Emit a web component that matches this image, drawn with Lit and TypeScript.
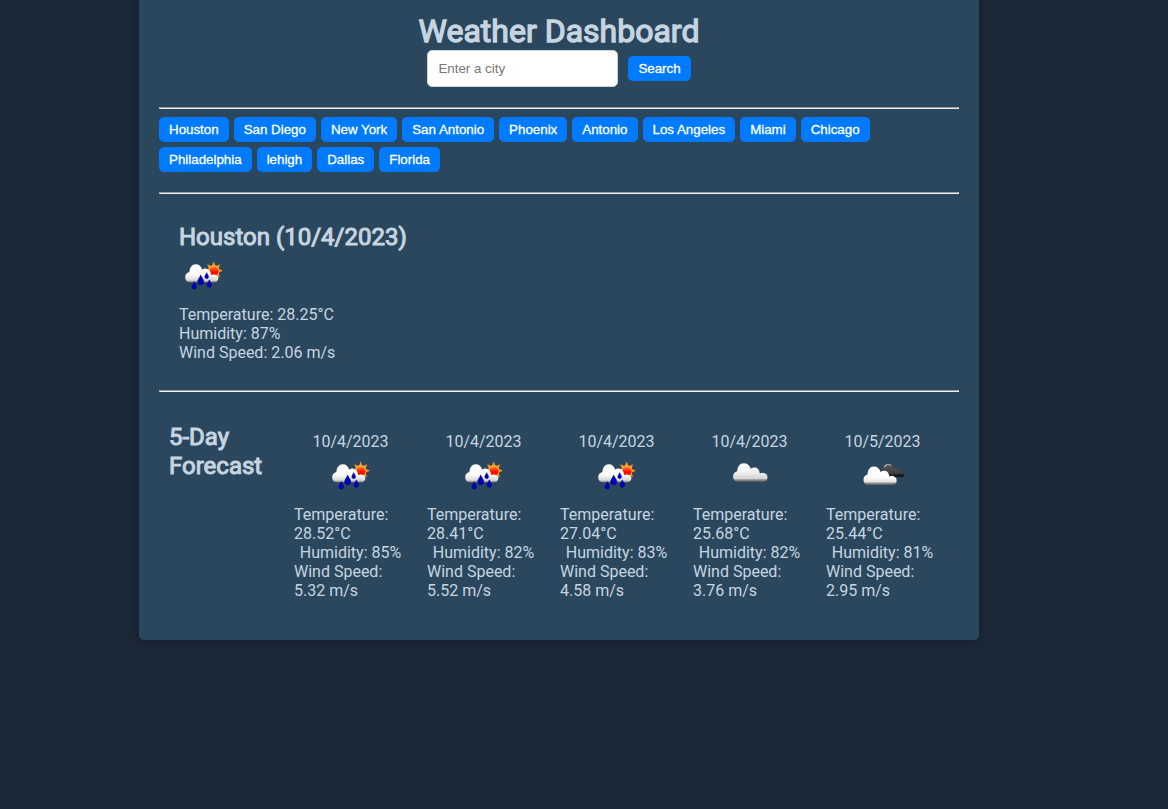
import { LitElement, html, css, svg } from "lit";
import { customElement, property } from "lit/decorators.js";

type Condition = "rain" | "cloud" | "broken";

interface Day {
  date: string;
  icon: Condition;
  temp: string;
  humidity: string;
  wind: string;
}

const CITIES = [
  "Houston", "San Diego", "New York", "San Antonio", "Phoenix", "Antonio",
  "Los Angeles", "Miami", "Chicago", "Philadelphia", "lehigh", "Dallas", "Florida",
];

const DAYS: Day[] = [
  { date: "10/4/2023", icon: "rain", temp: "28.52", humidity: "85", wind: "5.32" },
  { date: "10/4/2023", icon: "rain", temp: "28.41", humidity: "82", wind: "5.52" },
  { date: "10/4/2023", icon: "rain", temp: "27.04", humidity: "83", wind: "4.58" },
  { date: "10/4/2023", icon: "cloud", temp: "25.68", humidity: "82", wind: "3.76" },
  { date: "10/5/2023", icon: "broken", temp: "25.44", humidity: "81", wind: "2.95" },
];

const CLOUD =
  "M12.5 30.4C9.5 30.4 8.1 28.4 8.1 25.4C8.1 22.6 9.8 20.8 12.2 20.2C12.5 15.4 15 12.3 18.6 12.3C22.3 12.3 24.8 14.3 25.8 17.8C27 16.7 28.6 16.3 30.3 16.6C32.8 17 34.4 19 34.8 22.4C36.2 21.5 38.2 21.4 39.8 22.2C41.8 23 42.6 24.5 42.5 26.4C42.4 29 41 30.4 38.2 30.4Z";

const DROP = "M0 -5C0.6 -2.6 3.1 -0.6 3.1 1.8C3.1 3.7 1.8 4.8 0 4.8C-1.8 4.8 -3.1 3.7 -3.1 1.8C-3.1 -0.6 -0.6 -2.6 0 -5Z";

/** Eight-pointed star whose points are the rays of the sun. */
const RAYS = Array.from({ length: 16 }, (_, i) => {
  const r = i % 2 ? 5.2 : 9.2;
  const a = (i * Math.PI) / 8;
  return `${(34.7 + r * Math.sin(a)).toFixed(2)},${(19.8 - r * Math.cos(a)).toFixed(2)}`;
}).join(" ");

@customElement("weather-icon")
export class WeatherIcon extends LitElement {
  static styles = css`
    :host { display: block; width: 50px; height: 50px; }
    .icon { display: block; width: 50px; height: 50px; }
  `;

  @property() condition: Condition = "cloud";

  private rain() {
    return svg`
      <polygon fill="#f5981c" points=${RAYS}/>
      <circle cx="34.7" cy="19.8" r="5.5" fill="#fbb03a"/>
      <circle cx="34.9" cy="20.2" r="4.6" fill="url(#sun)"/>
      <path fill="url(#white)" d="M10.5 31.2C7.7 31 6.2 29 6.2 26.4C6.2 23.6 8 21.6 10.4 21.1C10.6 16.4 13 13.2 16.8 13.2C20 13.2 22.3 15.2 23.3 18.8C24.3 17.8 26 17.4 27.6 17.7C30.4 18.1 31.8 20.4 32 24C34 23.2 36.2 23.2 37.6 24.2C39 25.2 39.6 26.3 39.4 27.8C39 30.1 37.4 31.2 35.4 31.2Z"/>
      <g fill="#0505b8" stroke="#00007c" stroke-width=".6">
        <path transform="translate(15.3 34.4) scale(.76)" d=${DROP}/>
        <path transform="translate(21.7 29) scale(.98)" d=${DROP}/>
        <path transform="translate(27.7 24.7) scale(.62)" d=${DROP}/>
        <path transform="translate(30.3 32.6) scale(.76)" d=${DROP}/>
      </g>`;
  }

  private broken() {
    return svg`
      <path fill="url(#dark)" d="M29 26.1L25.3 18C25.5 14.8 27.6 12.9 30.6 12.9C33.3 12.9 35 14.4 35.6 16.8C38.2 16.2 39.8 17.4 40.6 20C43.8 19.8 46.4 21 46.4 23.4C46.4 25.2 45.2 26.1 43.2 26.1Z"/>
      <path fill="none" stroke="#b4b7b9" stroke-width="1.2" d="M26.2 16.4C27 14.2 28.6 13.4 30.4 13.5C31.6 13.6 32.4 14 32.9 14.8"/>
      <g transform="translate(-2.3 3) scale(.965 1.01)"><path fill="url(#bright)" d=${CLOUD}/></g>`;
  }

  render() {
    const shape =
      this.condition === "rain" ? this.rain()
      : this.condition === "broken" ? this.broken()
      : svg`<path fill="url(#grey)" d=${CLOUD}/>`;
    return html`
      <svg class="icon" viewBox="0 0 50 50" aria-hidden="true">
        <defs>
          <linearGradient id="white" x1="0" y1="0" x2="0" y2="1">
            <stop offset="0" stop-color="#fff"/><stop offset=".6" stop-color="#fafafa"/>
            <stop offset=".88" stop-color="#d8d8d8"/><stop offset="1" stop-color="#8a8a8a"/>
          </linearGradient>
          <linearGradient id="bright" x1="0" y1="0" x2="0" y2="1">
            <stop offset="0" stop-color="#fff"/><stop offset=".6" stop-color="#fcfcfc"/>
            <stop offset=".85" stop-color="#e4e4e4"/><stop offset=".91" stop-color="#8d8d8d"/><stop offset="1" stop-color="#777"/>
          </linearGradient>
          <linearGradient id="grey" x1="0" y1="0" x2="0" y2="1">
            <stop offset="0" stop-color="#fff"/><stop offset=".5" stop-color="#f0f0f0"/>
            <stop offset=".86" stop-color="#d2d2d2"/><stop offset=".91" stop-color="#8d8d8d"/><stop offset="1" stop-color="#777"/>
          </linearGradient>
          <linearGradient id="dark" x1="0" y1="0" x2="0" y2="1">
            <stop offset="0" stop-color="#555"/><stop offset=".7" stop-color="#414141"/>
            <stop offset=".85" stop-color="#1c1c1c"/><stop offset="1" stop-color="#101010"/>
          </linearGradient>
          <linearGradient id="sun" x1="0" y1="0" x2="0" y2="1">
            <stop offset="0" stop-color="#ff8a2a"/><stop offset=".35" stop-color="#ff3a12"/>
            <stop offset=".6" stop-color="#ff0800"/><stop offset="1" stop-color="#ff1a00"/>
          </linearGradient>
        </defs>
        ${shape}
      </svg>`;
  }
}

@customElement("app-root")
export class AppRoot extends LitElement {
  static styles = css`
    :host {
      display: flow-root;
      box-sizing: border-box;
      height: 809px;
      overflow: hidden;
      background: #1b2838;
      color: #c7d5e0;
      font: 16px/19px Roboto, sans-serif;
    }
    .panel {
      box-sizing: border-box;
      width: 840px;
      margin: -9px 0 0 139px;
      padding: 20px;
      background: #2a475e;
      border-radius: 5px;
      box-shadow: 0 0 10px rgba(0, 0, 0, 0.3);
    }
    .title, .heading {
      margin: 0;
      font-weight: 400;
      -webkit-text-stroke: 1px currentColor;
    }
    .title { padding-top: 1px; font-size: 32px; line-height: 39px; margin-bottom: -1px; text-align: center; -webkit-text-stroke-width: 1.3px; }
    .heading { padding-top: 1px; margin-bottom: -1px; font-size: 24px; line-height: 29px; }
    .search { display: flex; justify-content: center; align-items: center; gap: 10px; margin-bottom: 20px; }
    .field {
      box-sizing: border-box;
      width: 191px;
      height: 37px;
      padding: 10px;
      border: 1px solid #c7d5e0;
      border-radius: 5px;
      background: #fff;
      font: 13.333px "Liberation Sans", Arial, sans-serif;
    }
    .button {
      padding: 5px 10px;
      border: 0;
      border-radius: 5px;
      background: #007bff;
      color: #fff;
      font: 13.333px/15px "Liberation Sans", Arial, sans-serif;
      -webkit-text-stroke: 0.3px #fff;
    }
    .rule { margin: 0 0 8px; }
    .cities { display: flex; flex-wrap: wrap; gap: 5px; margin-bottom: 20px; }
    .current { padding: 20px; margin-bottom: 8px; border-radius: 5px; box-shadow: 0 0 10px rgba(0, 0, 0, 0.03); }
    .current .details { margin-top: 4px; }
    .forecast { display: grid; grid-template-columns: 115px repeat(5, 133px); padding: 22px 10px 10px; }
    .day { display: flex; flex-direction: column; align-items: center; padding: 10px; }
    .temp { margin-top: 4px; }
    .temp, .wind { align-self: stretch; }
  `;

  render() {
    return html`
      <main class="panel">
        <h1 class="title">Weather Dashboard</h1>
        <div class="search">
          <input class="field" type="text" placeholder="Enter a city" />
          <button class="button">Search</button>
        </div>
        <hr class="rule" />
        <nav class="cities">${CITIES.map((c) => html`<button class="button">${c}</button>`)}</nav>
        <hr class="rule" />
        <section class="current">
          <h2 class="heading">Houston (10/4/2023)</h2>
          <weather-icon condition="rain"></weather-icon>
          <div class="details">
            <div>Temperature: 28.25°C</div>
            <div>Humidity: 87%</div>
            <div>Wind Speed: 2.06 m/s</div>
          </div>
        </section>
        <hr class="rule" />
        <section class="forecast">
          <h2 class="heading">5-Day Forecast</h2>
          ${DAYS.map((d) => html`
            <article class="day">
              <div>${d.date}</div>
              <weather-icon condition=${d.icon}></weather-icon>
              <div class="temp">Temperature: ${d.temp}°C</div>
              <div>Humidity: ${d.humidity}%</div>
              <div class="wind">Wind Speed: ${d.wind} m/s</div>
            </article>`)}
        </section>
      </main>`;
  }
}
